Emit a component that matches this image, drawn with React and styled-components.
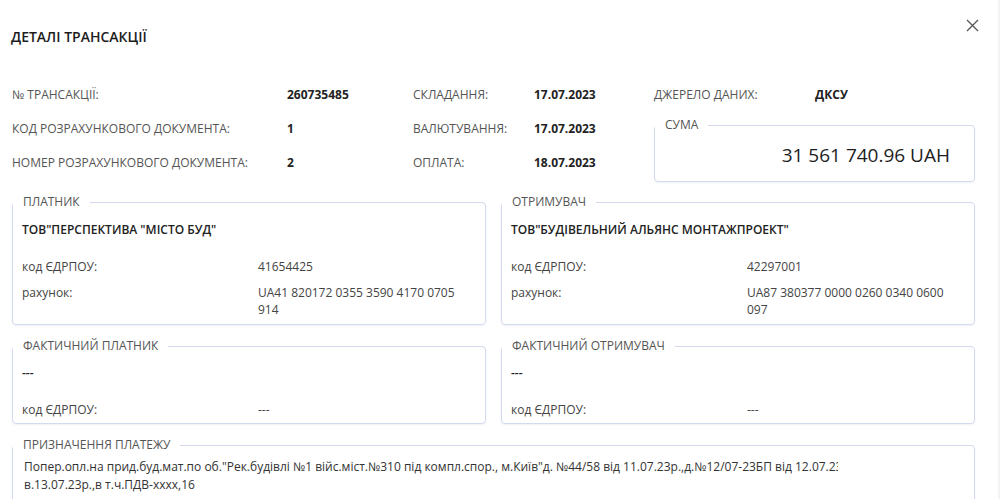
import React from 'react';
import styled, { createGlobalStyle } from 'styled-components';

const GlobalStyle = createGlobalStyle`
  html, body {
    margin: 0;
    padding: 0;
    background: #fff;
    font-family: 'Open Sans', 'Noto Sans', sans-serif;
    color: #222;
  }
`;

const Modal = styled.div`
  width: 1000px;
  height: 499px;
  box-sizing: border-box;
  padding: 0 23px 0 12px;
  border-right: 2px solid #f3f3f5;
  overflow: hidden;
`;

const Header = styled.div`
  display: flex;
  justify-content: space-between;
  align-items: flex-start;
  height: 77px;
`;

const Title = styled.h2`
  margin: 27px 0 0 -1px;
  font-size: 14px;
  line-height: 20px;
  font-weight: 600;
  color: #1d1d1d;
`;

const CloseButton = styled.button`
  margin: 17px -5px 0 0;
  padding: 0;
  width: 16px;
  height: 16px;
  border: none;
  background: transparent;
  cursor: pointer;
  display: flex;
  align-items: center;
  justify-content: center;
`;

const Summary = styled.div`
  display: flex;
`;

const InfoGrid = styled.div`
  display: grid;
  grid-template-columns: 275px 126px 121px 120px;
  grid-auto-rows: 34px;
  align-items: center;
`;

const Label = styled.span`
  font-size: 12px;
  line-height: 17px;
  color: #555;
  white-space: nowrap;
`;

const Value = styled.span`
  font-size: 12px;
  line-height: 17px;
  font-weight: 700;
  color: #222;
`;

const SideColumn = styled.div`
  display: flex;
  flex-direction: column;
  width: 321px;
`;

const SourceRow = styled.div`
  display: grid;
  grid-template-columns: 161px 1fr;
  height: 34px;
  align-items: center;
`;

const Box = styled.fieldset`
  margin: 0;
  padding: 0 ${(p) => p.$padRight || 9}px ${(p) => p.$padBottom || 0}px ${(p) => p.$padLeft || 9}px;
  min-width: 0;
  border: 1px solid #d3daed;
  border-radius: 4px;
  box-shadow: 0 1px 2px rgba(120, 135, 170, 0.12);
  box-sizing: border-box;
`;

const Legend = styled.legend`
  margin-left: ${(p) => -(p.$offset || 9)}px;
  padding: 0 10px;
  font-size: 12px;
  line-height: 16px;
  color: #555;
  text-transform: uppercase;
`;

const SumBox = styled(Box)`
  margin-top: 6px;
  height: 65px;
`;

const Amount = styled.div`
  font-size: 19px;
  line-height: 24px;
  color: #1d1d1d;
  text-align: right;
  padding-top: 10px;
`;

const Pair = styled.div`
  display: grid;
  grid-template-columns: 1fr 1fr;
  column-gap: 15px;
  margin-top: ${(p) => p.$top}px;
`;

const Party = styled.div`
  padding-top: ${(p) => p.$top}px;
`;

const PartyName = styled.div`
  font-size: 12px;
  line-height: 17px;
  font-weight: 600;
  color: #222;
  margin-bottom: ${(p) => p.$gap}px;
`;

const Details = styled.div`
  display: grid;
  grid-template-columns: 236px 212px;
  row-gap: 9px;
`;

const DetailLabel = styled.span`
  font-size: 12px;
  line-height: 17px;
  color: #444;
`;

const DetailValue = styled.span`
  font-size: 12px;
  line-height: 17px;
  color: #444;
`;

const PurposeBox = styled(Box)`
  margin-top: 13px;
  height: 90px;
`;

const PurposeText = styled.div`
  width: 814px;
  overflow: hidden;
  padding: 5px 0 0 2px;
`;

const PurposeLine = styled.div`
  font-size: 12px;
  line-height: 18px;
  color: #333;
  white-space: nowrap;
`;

const summary = [
  ['№ ТРАНСАКЦІЇ:', '260735485', 'СКЛАДАННЯ:', '17.07.2023'],
  ['КОД РОЗРАХУНКОВОГО ДОКУМЕНТА:', '1', 'ВАЛЮТУВАННЯ:', '17.07.2023'],
  ['НОМЕР РОЗРАХУНКОВОГО ДОКУМЕНТА:', '2', 'ОПЛАТА:', '18.07.2023'],
];

const parties = [
  {
    title: 'Платник',
    name: 'ТОВ"ПЕРСПЕКТИВА "МІСТО БУД"',
    code: '41654425',
    account: 'UA41 820172 0355 3590 4170 0705 914',
  },
  {
    title: 'Отримувач',
    name: 'ТОВ"БУДІВЕЛЬНИЙ АЛЬЯНС МОНТАЖПРОЕКТ"',
    code: '42297001',
    account: 'UA87 380377 0000 0260 0340 0600 097',
  },
];

const actual = [
  { title: 'Фактичний платник', name: '---', code: '---' },
  { title: 'Фактичний отримувач', name: '---', code: '---' },
];

const CloseIcon = () => (
  <svg width="13" height="13" viewBox="0 0 13 13">
    <path d="M1 1L12 12M12 1L1 12" stroke="#5a5a5a" strokeWidth="1.4" fill="none" />
  </svg>
);

const App = () => {
  return (
    <Modal>
      <GlobalStyle />
      <Header>
        <Title>ДЕТАЛІ ТРАНСАКЦІЇ</Title>
        <CloseButton aria-label="close">
          <CloseIcon />
        </CloseButton>
      </Header>

      <Summary>
        <InfoGrid>
          {summary.map((row) => (
            <React.Fragment key={row[0]}>
              <Label>{row[0]}</Label>
              <Value>{row[1]}</Value>
              <Label>{row[2]}</Label>
              <Value>{row[3]}</Value>
            </React.Fragment>
          ))}
        </InfoGrid>
        <SideColumn>
          <SourceRow>
            <Label>ДЖЕРЕЛО ДАНИХ:</Label>
            <Value>ДКСУ</Value>
          </SourceRow>
          <SumBox $padRight={24}>
            <Legend>Сума</Legend>
            <Amount>31 561 740.96 UAH</Amount>
          </SumBox>
        </SideColumn>
      </Summary>

      <Pair $top={12}>
        {parties.map((p) => (
          <Box key={p.title} $padBottom={6}>
            <Legend>{p.title}</Legend>
            <Party $top={11}>
              <PartyName $gap={20}>{p.name}</PartyName>
              <Details>
                <DetailLabel>код ЄДРПОУ:</DetailLabel>
                <DetailValue>{p.code}</DetailValue>
                <DetailLabel>рахунок:</DetailLabel>
                <DetailValue>{p.account}</DetailValue>
              </Details>
            </Party>
          </Box>
        ))}
      </Pair>

      <Pair $top={13}>
        {actual.map((p) => (
          <Box key={p.title} $padBottom={5}>
            <Legend>{p.title}</Legend>
            <Party $top={10}>
              <PartyName $gap={20}>{p.name}</PartyName>
              <Details>
                <DetailLabel>код ЄДРПОУ:</DetailLabel>
                <DetailValue>{p.code}</DetailValue>
              </Details>
            </Party>
          </Box>
        ))}
      </Pair>

      <PurposeBox>
        <Legend>Призначення платежу</Legend>
        <PurposeText>
          <PurposeLine>
            Попер.опл.на прид.буд.мат.по об."Рек.будівлі №1 війс.міст.№310 під компл.спор., м.Київ"д. №44/58 від 11.07.23р.,д.№12/07-23БП від 12.07.23р.,
          </PurposeLine>
          <PurposeLine>в.13.07.23р.,в т.ч.ПДВ-xxxx,16</PurposeLine>
        </PurposeText>
      </PurposeBox>
    </Modal>
  );
};

export default App;
